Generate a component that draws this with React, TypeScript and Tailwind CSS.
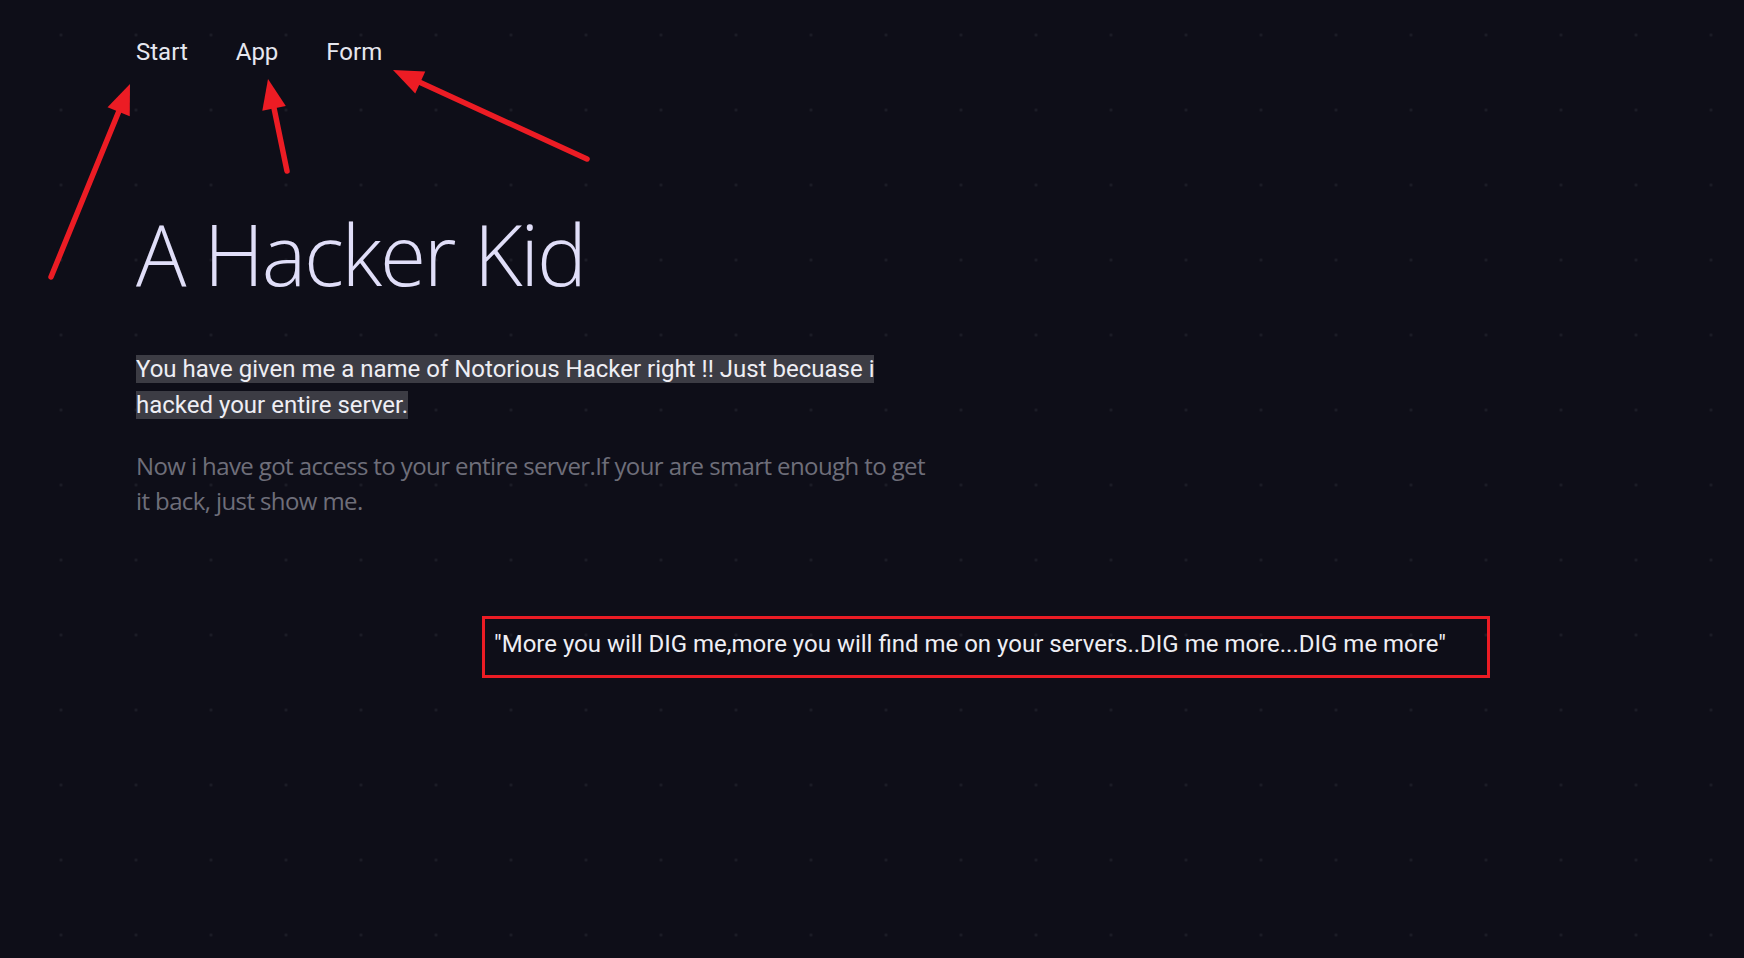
import React from "react";

type Pt = [number, number];

function Arrow({ tail, tip }: { tail: Pt; tip: Pt }) {
  const dx = tip[0] - tail[0];
  const dy = tip[1] - tail[1];
  const len = Math.hypot(dx, dy);
  const ux = dx / len;
  const uy = dy / len;
  const L = 30;
  const W = 12;
  const bx = tip[0] - ux * L;
  const by = tip[1] - uy * L;
  const nx = -uy * W;
  const ny = ux * W;
  const lx = tip[0] - ux * (L - 6);
  const ly = tip[1] - uy * (L - 6);
  return (
    <g>
      <line x1={tail[0]} y1={tail[1]} x2={lx} y2={ly} stroke="#ec1c24" strokeWidth={5.5} strokeLinecap="round" />
      <polygon
        points={`${tip[0]},${tip[1]} ${bx + nx},${by + ny} ${bx - nx},${by - ny}`}
        fill="#ec1c24"
      />
    </g>
  );
}

export default function App() {
  return (
    <div className="relative min-h-screen w-full overflow-hidden bg-[#0e0e18] bg-[radial-gradient(circle,#1d1e28_1.2px,transparent_1.7px)] bg-[length:75px_75px] bg-[position:23.5px_-2.5px]">
      <nav className="flex gap-[48px] pl-[136px] pt-[34px] font-['Roboto',sans-serif] text-[24px] leading-[36px] text-[#e6e7ef]">
        <a>Start</a>
        <a>App</a>
        <a>Form</a>
      </nav>

      <main className="pl-[136px]">
        <h1 className="mt-[142px] font-['Open_Sans',sans-serif] text-[84px] font-light leading-none tracking-[-2.3px] text-[#e0def8]">
          A Hacker Kid
        </h1>

        <p className="mt-[55px] w-[800px] font-['Roboto',sans-serif] text-[24px] leading-[36px] text-[#eeeef4]">
          <span className="bg-[#3c3c44]">
            You have given me a name of Notorious Hacker right !! Just becuase i hacked your entire server.
          </span>
        </p>
        <p className="mt-[25px] w-[800px] font-['Open_Sans',sans-serif] text-[24px] leading-[35px] tracking-[-0.6px] text-[#6e6e7a]">
          Now i have got access to your entire server.If your are smart enough to get it back, just show me.
        </p>

        <div className="ml-[346px] mt-[98px] w-[1008px] border-[3px] border-[#ec1c24] pb-[13px] pl-[9px] pt-[7px] font-['Roboto',sans-serif] text-[24px] leading-[36px] text-[#eeeef4]">
          "More you will DIG me,more you will find me on your servers..DIG me more...DIG me more"
        </div>
      </main>

      <svg className="pointer-events-none absolute left-0 top-0" width="1744" height="958">
        <Arrow tail={[51, 277]} tip={[130, 84]} />
        <Arrow tail={[287, 171]} tip={[268, 79]} />
        <Arrow tail={[587, 159]} tip={[393, 70]} />
      </svg>
    </div>
  );
}
